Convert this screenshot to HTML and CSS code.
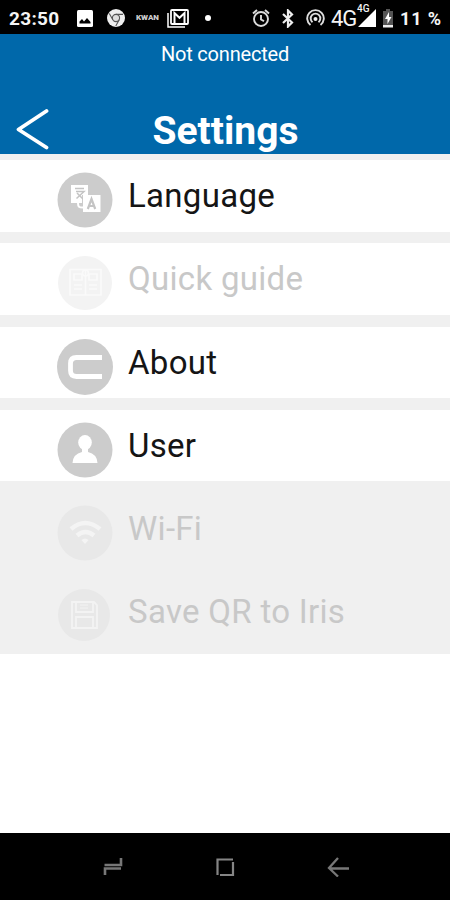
FILE: index.html
```html
<!DOCTYPE html>
<html lang="en">
<head>
<meta charset="utf-8">
<meta name="viewport" content="width=device-width, initial-scale=1">
<title>Settings</title>
<link rel="stylesheet" href="styles.css">
</head>
<body>
<div class="statusbar">
  <span class="time">23:50</span>
  <svg class="photo" width="16" height="17" viewBox="0 0 16 17"><rect width="16" height="17" rx="1.5" fill="#fff"/><path d="M2.500 13.500V11.500L5 9l2 2.500L10 8l3.500 4v1.500z" fill="#000"/></svg>
  <svg class="chrome" width="18" height="18" viewBox="0 0 18 18"><circle cx="9" cy="9" r="9" fill="#eee"/><circle cx="9" cy="9" r="3.600" fill="#ddd" stroke="#555" stroke-width="1.100"/><path d="M9 5.400H16M5.800 10.800L2.300 4.600M12.200 10.800L8.800 17" stroke="#555" stroke-width="1.100" fill="none"/></svg>
  <span class="brand">KWAN</span>
  <svg class="mail" width="22" height="19" viewBox="0 0 22 19"><path d="M1 4v14h17" stroke="#fff" stroke-width="1.500" fill="none"/><rect x="4" y="1" width="17" height="14" rx="1" fill="none" stroke="#fff" stroke-width="1.800"/><path d="M7.500 14V4l5 4.800 5-4.800v10" fill="none" stroke="#fff" stroke-width="2"/></svg>
  <span class="dot"></span>
  <svg class="alarm" width="18" height="18" viewBox="0 0 18 18"><g fill="none" stroke="#ddd" stroke-width="1.900"><circle cx="9" cy="10" r="7"/><path d="M9 6v4.500l3 1.700M1 4.500L5 1M17 4.500L13 1"/></g></svg>
  <svg class="bluetooth" width="12" height="19" viewBox="0 0 12 19"><path d="M1 5l9 8.500L6 17.500v-16L10 5.500 1 14" fill="none" stroke="#eee" stroke-width="2.200"/></svg>
  <svg class="hotspot" width="19" height="18" viewBox="0 0 19 18"><g fill="none" stroke="#ddd" stroke-width="1.900"><path d="M4.500 16A8.300 8.300 0 1 1 14.500 16"/><path d="M6.500 13.200A4.800 4.800 0 1 1 12.500 13.200"/></g><circle cx="9.500" cy="10" r="2" fill="#eee"/></svg>
  <span class="network">4G</span>
  <span class="signal"><span class="signal-label">4G</span><svg width="18" height="18" viewBox="0 0 18 18"><path d="M0 18L18 0v18z" fill="#fff"/></svg></span>
  <svg class="battery" width="10" height="19" viewBox="0 0 10 19"><path d="M3 0h4v2h3v14H0V2h3z" fill="#555"/><path d="M0 16h10v2.500H0z" fill="#eee"/><path d="M6 3L2 10h2.500v5L8.500 8H6z" fill="#fff"/></svg>
  <span class="percent">11 %</span>
</div>

<header class="header">
  <div class="connection">Not connected</div>
  <div class="titlebar">
    <svg class="back" width="34" height="42" viewBox="0 0 34 42"><path d="M30.500 3L2.500 21.500 30.500 39.500" fill="none" stroke="#fff" stroke-width="3.800" stroke-linecap="round" stroke-linejoin="round"/></svg>
    <h1>Settings</h1>
  </div>
</header>

<main class="menu">
  <div class="row">
    <svg class="icon" viewBox="0 0 56 56"><circle cx="28" cy="28" r="27.500" fill="#ccc"/><path d="M14 13h17v10h-6v8H14z" fill="#fff"/><path d="M18 16.500h9M19 19.500h8l-7.500 7M20 21l6 6" fill="none" stroke="#c4c4c4" stroke-width="1.500"/><path d="M21 31c0 4 1 4.500 5 4.500" fill="none" stroke="#fff" stroke-width="2"/><path d="M26 23h17.500v17H26z" fill="#fff"/><path d="M30.800 37L34.500 27l3.700 10M32 34h5" fill="none" stroke="#c4c4c4" stroke-width="2.200"/></svg>
    <span class="label">Language</span>
  </div>
  <div class="row disabled">
    <svg class="icon" viewBox="0 0 56 56"><circle cx="28" cy="28" r="27" fill="#f3f3f3"/><g fill="none" stroke="#fafafa" stroke-width="1.600"><path d="M13 14.500h31V40H13zM28.500 14v26M17 19h8v6h-8zM32 19h8v6h-8zM17 30h8M32 30h8M17 34h8M32 34h8"/><circle cx="28.500" cy="18" r="3"/></g></svg>
    <span class="label">Quick guide</span>
  </div>
  <div class="row">
    <svg class="icon" viewBox="0 0 56 56"><circle cx="28" cy="28" r="28" fill="#ccc"/><path d="M45 18.500H19.500q-6 0-6 6v7q0 6 6 6H45" fill="none" stroke="#fff" stroke-width="4.800"/></svg>
    <span class="label">About</span>
  </div>
  <div class="row">
    <svg class="icon" viewBox="0 0 56 56"><circle cx="28" cy="28" r="27.500" fill="#ccc"/><ellipse cx="28" cy="20.500" rx="6.800" ry="7.500" fill="#fff"/><path d="M25 24h6v6q9 2 9.500 11h-25Q16 32 25 30z" fill="#fff"/></svg>
    <span class="label">User</span>
  </div>
  <div class="row disabled plain">
    <svg class="icon" viewBox="0 0 56 56"><circle cx="28" cy="28" r="27.500" fill="#e8e8e8"/><g fill="none" stroke="#f4f4f4" stroke-width="4.500"><path d="M14 24q14-12 29 0"/><path d="M20 30.500q8.500-7 17 0"/></g><path d="M24.500 35q3.500-3 7 0L28 39z" fill="#f4f4f4"/></svg>
    <span class="label">Wi-Fi</span>
  </div>
  <div class="row disabled plain">
    <svg class="icon" viewBox="0 0 56 56"><circle cx="27" cy="27" r="26" fill="#e8e8e8"/><g fill="none" stroke="#f3f3f3" stroke-width="1.800"><path d="M15 14h22l3 3v23H15zM19 14v10h17V14"/><path d="M19 40V29h17v11"/><path d="M23 17h8M23 20h8" stroke-width="1"/></g></svg>
    <span class="label">Save QR to Iris</span>
  </div>
</main>

<nav class="navbar">
  <svg width="20" height="20" viewBox="0 0 20 20"><path d="M18 1v7H1.500M18 11.500H2V18" fill="none" stroke="#777" stroke-width="2.600"/></svg>
  <svg width="20" height="20" viewBox="0 0 20 20"><path d="M18 5v13H5M2.500 18V2.500H18" fill="none" stroke="#858585" stroke-width="2.200"/></svg>
  <svg width="22" height="20" viewBox="0 0 22 20"><path d="M11 1L2 11l9 8.500M2 11.500h20" fill="none" stroke="#777" stroke-width="2.300"/></svg>
</nav>
</body>
</html>
```
FILE: styles.css
```css
* { box-sizing: border-box; }

body {
  margin: 0;
  height: 900px;
  display: flex;
  flex-direction: column;
  background: #fff;
  font-family: Roboto, "Liberation Sans", sans-serif;
  overflow: hidden;
}

svg { display: block; flex: none; }

.statusbar {
  flex: none;
  height: 34px;
  padding: 2px 0 0 9px;
  display: flex;
  align-items: center;
  background: #000;
  color: #f5f5f5;
  white-space: nowrap;
}

.time { width: 68px; font-size: 19px; font-weight: 700; letter-spacing: 0.3px; }
.chrome { margin-left: 14px; }
.brand {
  width: 23px;
  margin-left: 11px;
  font-size: 8px;
  font-weight: 900;
  line-height: 10px;
  color: #ccc;
}
.mail { margin-left: 8px; }
.dot { width: 6px; height: 6px; margin-left: 16px; border-radius: 50%; background: #fff; }
.alarm { margin-left: 41px; }
.bluetooth { margin-left: 12px; }
.hotspot { margin-left: 12px; }
.network { width: 27px; margin-left: 6px; font-size: 22px; letter-spacing: -1px; }
.signal { position: relative; }
.signal-label {
  position: absolute;
  left: -1px;
  top: -6px;
  font-size: 10px;
  line-height: 12px;
  font-weight: 500;
}
.battery { margin-left: 7px; }
.percent { margin-left: 7px; font-size: 18px; font-weight: 700; letter-spacing: 0.9px; }

.header {
  flex: none;
  height: 119.5px;
  background: #0068aa;
  color: #fff;
}

.connection {
  height: 40px;
  font-size: 20px;
  line-height: 40px;
  letter-spacing: -0.2px;
  text-align: center;
}

.titlebar {
  height: 79px;
  padding: 34px 0 0 16px;
  display: grid;
  grid-template-columns: 34px 1fr 49px;
}

.titlebar h1 {
  margin: 0;
  font-size: 39px;
  line-height: 46px;
  font-weight: 700;
  text-align: center;
}

.menu {
  flex: none;
  height: 500.5px;
  padding-top: 6.5px;
  background: #f0f0f0;
}

.row {
  height: 71.5px;
  margin-bottom: 11.8px;
  padding: 12px 0 0 57px;
  display: flex;
  align-items: flex-start;
  background: #fff;
  color: #151515;
}

.row.disabled { color: #c8c8c8; }
.row.plain { background: transparent; }

.icon { width: 56px; height: 56px; }

.label {
  margin: 4px 0 0 15px;
  font-size: 33px;
  line-height: 40px;
  letter-spacing: 0.3px;
  white-space: nowrap;
}

.navbar {
  flex: none;
  height: 67px;
  margin-top: auto;
  padding: 0 101px 0 103px;
  display: flex;
  align-items: center;
  justify-content: space-between;
  background: #000;
}
```
